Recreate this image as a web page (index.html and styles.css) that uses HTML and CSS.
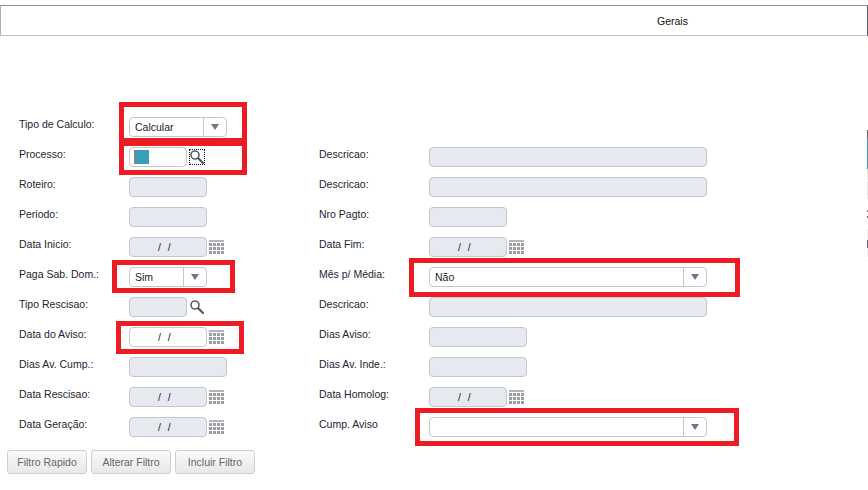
FILE: index.html
```html
<!DOCTYPE html>
<html lang="pt">
<head>
<meta charset="utf-8">
<title>Gerais</title>
<link rel="stylesheet" href="styles.css">
</head>
<body>
<svg class="defs" width="0" height="0" aria-hidden="true">
  <symbol id="cal" viewBox="0 0 15 14">
    <rect width="15" height="14" fill="#9a9ea3"/>
    <rect width="15" height="2" fill="#b4b4b4"/>
    <path d="M3.5 2V14M7.5 2V14M11.5 2V14M0 2.5H15M0 6.5H15M0 10.5H15" stroke="#fff" stroke-width="1" fill="none"/>
  </symbol>
  <symbol id="mag" viewBox="0 0 14 14">
    <circle cx="5" cy="5" r="4" fill="none" stroke="#55606c" stroke-width="1.6"/>
    <path d="M8.2 8.2L13 13" stroke="#4c5864" stroke-width="2.2" stroke-linecap="round"/>
  </symbol>
</svg>

<header class="topbar"><span class="tab">Gerais</span></header>

<main class="form">
  <div class="field">
    <span class="label">Tipo de Calculo:</span>
    <div class="select w98"><span class="val">Calcular</span><span class="btn"><i class="arrow"></i></span></div>
  </div>
  <div class="field"></div>

  <div class="field">
    <span class="label">Processo:</span>
    <div class="input w58 open"><i class="cursor"></i></div>
    <svg class="mag focus"><use href="#mag"/></svg>
  </div>
  <div class="field">
    <span class="label">Descricao:</span>
    <div class="input ro w278"></div>
  </div>

  <div class="field">
    <span class="label">Roteiro:</span>
    <div class="input ro w78"></div>
  </div>
  <div class="field">
    <span class="label">Descricao:</span>
    <div class="input ro w278"></div>
  </div>

  <div class="field">
    <span class="label">Periodo:</span>
    <div class="input ro w78"></div>
  </div>
  <div class="field">
    <span class="label">Nro Pagto:</span>
    <div class="input ro w78"></div>
  </div>

  <div class="field">
    <span class="label">Data Inicio:</span>
    <div class="input ro w78 date">/ /</div>
    <svg class="cal"><use href="#cal"/></svg>
  </div>
  <div class="field">
    <span class="label">Data Fim:</span>
    <div class="input ro w78 date">/ /</div>
    <svg class="cal"><use href="#cal"/></svg>
  </div>

  <div class="field">
    <span class="label">Paga Sab. Dom.:</span>
    <div class="select w78"><span class="val">Sim</span><span class="btn"><i class="arrow"></i></span></div>
  </div>
  <div class="field">
    <span class="label">Mês p/ Média:</span>
    <div class="select w278"><span class="val">Não</span><span class="btn"><i class="arrow"></i></span></div>
  </div>

  <div class="field">
    <span class="label">Tipo Rescisao:</span>
    <div class="input ro w58"></div>
    <svg class="mag"><use href="#mag"/></svg>
  </div>
  <div class="field">
    <span class="label">Descricao:</span>
    <div class="input ro w278"></div>
  </div>

  <div class="field">
    <span class="label">Data do Aviso:</span>
    <div class="input w78 date">/ /</div>
    <svg class="cal"><use href="#cal"/></svg>
  </div>
  <div class="field">
    <span class="label">Dias Aviso:</span>
    <div class="input ro w98"></div>
  </div>

  <div class="field">
    <span class="label">Dias Av. Cump.:</span>
    <div class="input ro w98"></div>
  </div>
  <div class="field">
    <span class="label">Dias Av. Inde.:</span>
    <div class="input ro w98"></div>
  </div>

  <div class="field">
    <span class="label">Data Rescisao:</span>
    <div class="input ro w78 date">/ /</div>
    <svg class="cal"><use href="#cal"/></svg>
  </div>
  <div class="field">
    <span class="label">Data Homolog:</span>
    <div class="input ro w78 date">/ /</div>
    <svg class="cal"><use href="#cal"/></svg>
  </div>

  <div class="field">
    <span class="label">Data Geração:</span>
    <div class="input ro w78 date">/ /</div>
    <svg class="cal"><use href="#cal"/></svg>
  </div>
  <div class="field">
    <span class="label">Cump. Aviso</span>
    <div class="select w278"><span class="val"></span><span class="btn"><i class="arrow"></i></span></div>
  </div>
</main>

<footer class="actions">
  <button class="action" type="button">Filtro Rapido</button>
  <button class="action" type="button">Alterar Filtro</button>
  <button class="action" type="button">Incluir Filtro</button>
</footer>

<div class="mark m1"></div>
<div class="mark m2"></div>
<div class="mark m3"></div>
<div class="mark m4"></div>
<div class="mark m5"></div>
<div class="mark m6"></div>
<div class="edge"></div>
</body>
</html>
```

FILE: styles.css
```css
* { box-sizing: border-box; }
html, body { margin: 0; height: 490px; overflow: hidden; }
body {
  position: relative;
  background: #fff;
  font-family: "Liberation Sans", Arial, sans-serif;
  font-size: 10.5px;
  color: #1c2530;
}
.defs { position: absolute; }

.topbar {
  margin-top: 5px;
  height: 31px;
  border-top: 1px solid #8f8f8f;
  border-bottom: 1px solid #c0c0c0;
  border-left: 1px solid #b0b0b0;
  border-right: 1px solid #5a6070;
  padding-left: 656px;
  display: flex;
  align-items: center;
}
.tab { color: #111; }

.form {
  margin-top: 81px;
  padding-left: 19px;
  display: grid;
  grid-template-columns: 300px 1fr;
  grid-auto-rows: 30px;
}
.field { display: flex; align-items: flex-start; }
.label {
  width: 110px;
  flex: none;
  line-height: 14px;
}
.input, .select {
  height: 20px;
  border: 1px solid #c4c7cb;
  border-radius: 4px;
  background: #fff;
  flex: none;
}
.input.ro { background: #e6e9f0; }
.w58 { width: 58px; }
.w78 { width: 78px; }
.w98 { width: 98px; }
.w278 { width: 278px; }

.date {
  padding-left: 28px;
  line-height: 18px;
  word-spacing: 4px;
  color: #222;
}
.open { padding: 2px 0 0 4px; }
.cursor {
  display: block;
  width: 15px;
  height: 14px;
  background: #3a9dbb;
  border-left: 1px solid #d5694a;
}

.select { display: flex; }
.val {
  flex: 1;
  padding-left: 5px;
  line-height: 19px;
  color: #222;
}
.btn {
  width: 23px;
  flex: none;
  border-left: 1px solid #c4c7cb;
  display: flex;
  align-items: center;
  justify-content: center;
}
.arrow {
  width: 0;
  height: 0;
  border-left: 4px solid transparent;
  border-right: 4px solid transparent;
  border-top: 6px solid #6b7787;
}

.cal { width: 15px; height: 14px; margin: 3px 0 0 2px; flex: none; }
.mag { width: 14px; height: 14px; margin: 3px 0 0 3px; flex: none; }
.mag.focus { outline: 1px dotted #111; }

.actions {
  margin-top: 3px;
  padding-left: 7px;
  display: flex;
  gap: 4px;
}
.action {
  width: 80px;
  height: 24px;
  padding: 0;
  border: 1px solid #cfcfcf;
  border-radius: 3px;
  background: linear-gradient(#fafafa, #e8e8e8);
  color: #666;
  font: 10.5px "Liberation Sans", Arial, sans-serif;
}

.mark { position: absolute; border: 5px solid #ed1c24; }
.m1 { left: 119px; top: 102px; width: 128px; height: 41px; }
.m2 { left: 119px; top: 141px; width: 128px; height: 34px; }
.m3 { left: 112px; top: 260px; width: 123px; height: 33px; }
.m4 { left: 116px; top: 321px; width: 128px; height: 33px; }
.m5 { left: 409px; top: 258px; width: 331px; height: 39px; }
.m6 { left: 415px; top: 408px; width: 324px; height: 38px; }

.edge {
  position: absolute;
  left: 867px;
  top: 130px;
  width: 1px;
  height: 130px;
  background: linear-gradient(#666 0 8px, #3399bb 8px 39px, #e8e8e8 39px 50px, #fff 50px 52px, #e8e8e8 52px 69px, #fff 69px 80px, #8a6a7a 80px 82px, #fff 82px 86px, #8a6a50 86px 88px, #fff 88px 99px, #eee 99px 110px, #6a6a9a 110px 118px, #eee 118px 127px, #fff 127px);
}
```
